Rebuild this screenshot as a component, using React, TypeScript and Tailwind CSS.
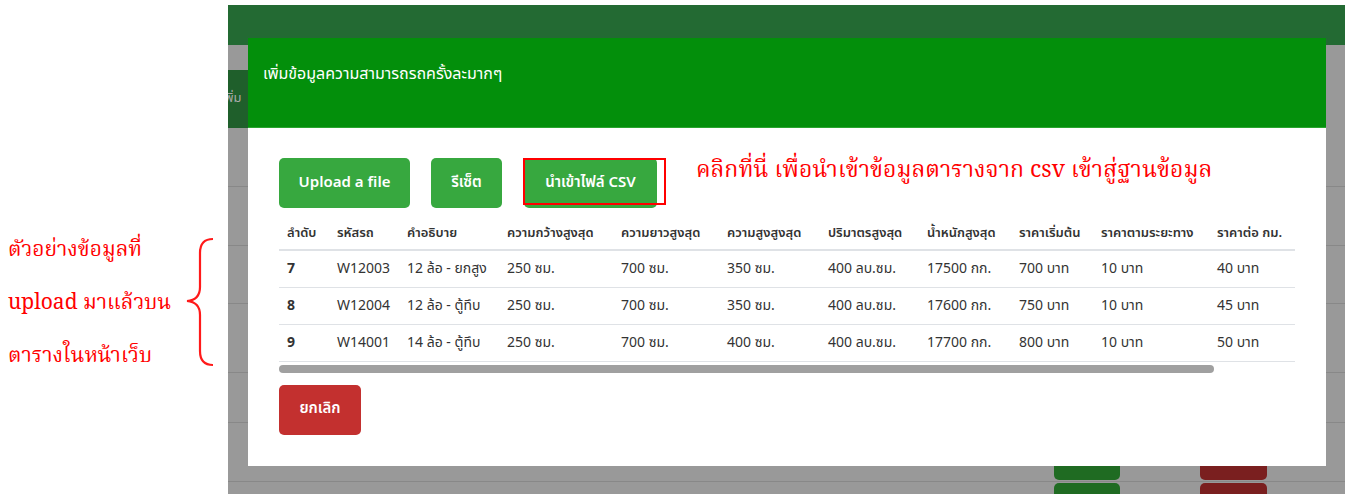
import React from "react";

const ui = { fontFamily: '"Noto Sans Thai", "Noto Sans", "Open Sans", sans-serif' };
const serif = { fontFamily: '"Noto Serif Thai", "Liberation Serif", "Noto Sans Thai", serif' };

const headers = [
  "ลำดับ",
  "รหัสรถ",
  "คำอธิบาย",
  "ความกว้างสูงสุด",
  "ความยาวสูงสุด",
  "ความสูงสูงสุด",
  "ปริมาตรสูงสุด",
  "น้ำหนักสูงสุด",
  "ราคาเริ่มต้น",
  "ราคาตามระยะทาง",
  "ราคาต่อ กม.",
];

const widths = [50, 70, 100, 114, 106, 101, 99, 92, 82, 116, 200];

const rows = [
  ["7", "W12003", "12 ล้อ - ยกสูง", "250 ซม.", "700 ซม.", "350 ซม.", "400 ลบ.ซม.", "17500 กก.", "700 บาท", "10 บาท", "40 บาท"],
  ["8", "W12004", "12 ล้อ - ตู้ทึบ", "250 ซม.", "700 ซม.", "350 ซม.", "400 ลบ.ซม.", "17600 กก.", "750 บาท", "10 บาท", "45 บาท"],
  ["9", "W14001", "14 ล้อ - ตู้ทึบ", "250 ซม.", "700 ซม.", "400 ซม.", "400 ลบ.ซม.", "17700 กก.", "800 บาท", "10 บาท", "50 บาท"],
];

function Brace() {
  return (
    <svg width="32" height="132" viewBox="0 0 32 132" className="block">
      <path
        d="M 28 2 Q 15 2 15 16 L 15 50 Q 15 63 2 64 Q 15 65 15 78 L 15 114 Q 15 128 28 128"
        fill="none"
        stroke="#ff1a1a"
        strokeWidth="2.2"
      />
    </svg>
  );
}

export default function App() {
  return (
    <div className="flex w-[1345px] h-[496px] bg-white overflow-hidden" style={ui}>
      {/* Left annotation */}
      <div className="w-[228px] shrink-0 flex items-start pt-[224px]">
        <div className="pl-[8px] flex flex-col text-[#ff0000] text-[21px] leading-[53px] whitespace-nowrap" style={serif}>
          <span>ตัวอย่างข้อมูลที่</span>
          <span>upload มาแล้วบน</span>
          <span>ตารางในหน้าเว็บ</span>
        </div>
        <div className="ml-auto mr-[11px] mt-[13px]">
          <Brace />
        </div>
      </div>

      {/* Backdrop page */}
      <div className="relative flex-1 mt-[5px] h-[489px] bg-[#999999] overflow-hidden">
        <div className="h-[40px] bg-[#236a33]" />
        <div className="h-[25px]" />
        <div className="h-[58px] w-[120px] bg-[#1f5f2b] flex items-center">
          <span className="ml-[-7px] text-[13px] text-[#a9a9a9]">เพิ่ม</span>
        </div>
        <div className="h-[59px] border-b border-[#888]" />
        <div className="h-[59px] border-b border-[#888]" />
        <div className="h-[58px] border-b border-[#888]" />
        <div className="h-[69px] border-b border-[#888]" />
        <div className="h-[50px] border-b border-[#888]" />
        <div className="h-[59px] border-b border-[#888] flex items-end">
          <div className="ml-[826px] w-[66px] h-[40px] mb-[1px] bg-[#1f6b22] rounded-[5px]" />
          <div className="ml-[80px] w-[67px] h-[40px] mb-[1px] bg-[#7a1f1f] rounded-[5px]" />
        </div>
        <div className="h-[12px] flex items-start">
          <div className="ml-[826px] w-[66px] h-[20px] mt-[1px] bg-[#1f6b22] rounded-[5px]" />
          <div className="ml-[80px] w-[67px] h-[20px] mt-[1px] bg-[#7a1f1f] rounded-[5px]" />
        </div>

        {/* Modal */}
        <div className="absolute left-[20px] top-[33px] w-[1078px] h-[428px] bg-white flex flex-col">
          <div className="h-[90px] bg-[#038f0b] border-b border-[#2aa52f] pl-[15px] pt-[24px]">
            <span className="text-white text-[16px]">เพิ่มข้อมูลความสามารถรถครั้งละมากๆ</span>
          </div>
          <div className="px-[31px] pt-[30px]">
            <div className="flex items-start">
              <button className="h-[50px] w-[131px] rounded-[5px] bg-[#37a83f] text-white text-[15px] font-semibold">
                Upload a file
              </button>
              <button className="ml-[21px] h-[50px] w-[71px] rounded-[5px] bg-[#37a83f] text-white text-[15px] font-semibold">
                รีเซ็ต
              </button>
              <div className="relative ml-[22px]">
                <button className="h-[50px] w-[133px] rounded-[5px] bg-[#37a83f] text-white text-[15px] font-semibold">
                  นำเข้าไฟล์ CSV
                </button>
                <div className="absolute left-[-1px] top-0 w-[143px] h-[47px] border-2 border-[#ff0000]" />
              </div>
              <span className="ml-[39px] mt-[-4px] text-[#ff0000] text-[23px] leading-[34px] whitespace-nowrap" style={serif}>
                คลิกที่นี่ เพื่อนำเข้าข้อมูลตารางจาก csv เข้าสู่ฐานข้อมูล
              </span>
            </div>

            <div className="mt-[10px] w-[1016px] overflow-hidden">
              <table className="table-fixed border-collapse w-[1130px] text-[#333]">
                <colgroup>
                  {widths.map((w, i) => (
                    <col key={i} style={{ width: w }} />
                  ))}
                </colgroup>
                <thead>
                  <tr className="h-[32px] border-b-2 border-[#dfe2e6]">
                    {headers.map((h, i) => (
                      <th
                        key={i}
                        className="text-left font-semibold text-[13px] pl-[8px] whitespace-nowrap align-middle"
                      >
                        {h}
                      </th>
                    ))}
                  </tr>
                </thead>
                <tbody>
                  {rows.map((r, ri) => (
                    <tr key={ri} className="h-[37px] border-b border-[#dfe2e6]">
                      {r.map((c, ci) => (
                        <td
                          key={ci}
                          className={`pl-[8px] text-[14px] whitespace-nowrap align-middle ${ci === 0 ? "font-bold" : "font-normal"}`}
                        >
                          {c}
                        </td>
                      ))}
                    </tr>
                  ))}
                </tbody>
              </table>
            </div>
            <div className="mt-[3px] w-[935px] h-[8px] rounded-full bg-[#a0a0a0]" />

            <button className="mt-[12px] h-[50px] w-[82px] rounded-[5px] bg-[#c3302f] text-white text-[15px] font-semibold">
              ยกเลิก
            </button>
          </div>
        </div>
      </div>
    </div>
  );
}
